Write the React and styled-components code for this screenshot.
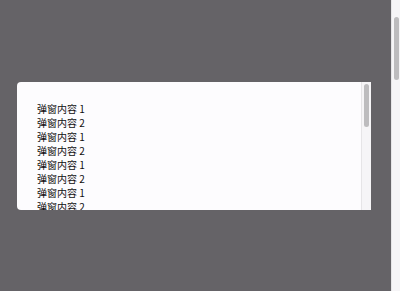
import React from 'react';
import styled, { createGlobalStyle } from 'styled-components';

const GlobalStyle = createGlobalStyle`
  html, body {
    margin: 0;
    padding: 0;
    overflow: hidden;
  }
  body {
    font-family: 'Noto Sans CJK SC', 'Liberation Sans', sans-serif;
  }
`;

const Page = styled.div`
  display: flex;
  width: 400px;
  height: 291px;
`;

const Mask = styled.div`
  flex: 1;
  background: #656367;
  padding: 82px 20px 0 17px;
  box-sizing: border-box;
`;

const Dialog = styled.div`
  display: flex;
  width: 354px;
  height: 128px;
  background: #fdfcfe;
  border-radius: 4px 0 0 4px;
  overflow: hidden;
`;

const Body = styled.div`
  flex: 1;
  overflow: hidden;
  padding: 20px;
  color: #0f0f0f;
  font-size: 10px;
  line-height: 14px;
`;

const Line = styled.div`
  white-space: nowrap;
`;

const Track = styled.div`
  width: ${(p) => p.$width}px;
  background: #f6f5f7;
  border-left: 1px solid #e6e5e7;
  box-sizing: border-box;
  padding: ${(p) => p.$top}px ${(p) => p.$right}px 0 ${(p) => p.$left}px;
`;

const Thumb = styled.div`
  height: ${(p) => p.$height}px;
  border-radius: 3px;
  background: #bdbcbe;
`;

const lines = Array.from({ length: 8 }, (_, i) => `弹窗内容 ${(i % 2) + 1}`);

export default function App() {
  return (
    <>
      <GlobalStyle />
      <Page>
        <Mask>
          <Dialog>
            <Body>
              {lines.map((text, i) => (
                <Line key={i}>{text}</Line>
              ))}
            </Body>
            <Track $width={10} $top={2} $right={2} $left={2}>
              <Thumb $height={43} />
            </Track>
          </Dialog>
        </Mask>
        <Track $width={9} $top={17} $right={1} $left={2}>
          <Thumb $height={63} />
        </Track>
      </Page>
    </>
  );
}
